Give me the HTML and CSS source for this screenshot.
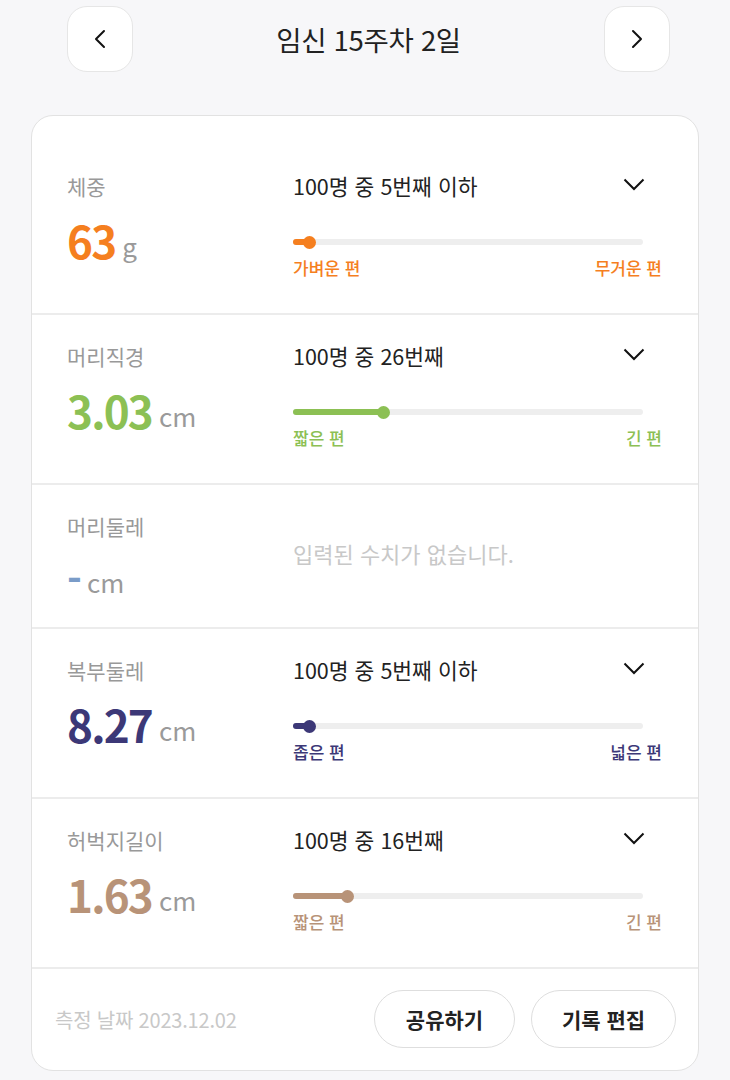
FILE: index.html
```html
<!DOCTYPE html>
<html lang="ko">
<head>
<meta charset="utf-8">
<link rel="stylesheet" href="styles.css">
</head>
<body>
<header class="topbar">
  <button class="nav-btn" aria-label="이전">
    <svg width="14" height="20" viewBox="0 0 14 20"><path d="M11 2 L3 10 L11 18" fill="none" stroke="#111" stroke-width="2" stroke-linecap="round" stroke-linejoin="round"/></svg>
  </button>
  <h1 class="title">임신 15주차 2일</h1>
  <button class="nav-btn" aria-label="다음">
    <svg width="14" height="20" viewBox="0 0 14 20"><path d="M3 2 L11 10 L3 18" fill="none" stroke="#111" stroke-width="2" stroke-linecap="round" stroke-linejoin="round"/></svg>
  </button>
</header>

<main class="card">
  <section class="row first orange">
    <div class="left">
      <div class="label">체중</div>
      <div class="value"><span class="num">63</span><span class="unit">g</span></div>
    </div>
    <div class="right">
      <div class="question"><span>100명 중 5번째 이하</span>
        <svg class="chev" width="22" height="13" viewBox="0 0 22 13"><path d="M1.5 1.5 L11 11 L20.5 1.5" fill="none" stroke="#111" stroke-width="2"/></svg>
      </div>
      <div class="track"><div class="fill" style="width:16px"></div></div>
      <div class="ends"><span>가벼운 편</span><span>무거운 편</span></div>
    </div>
  </section>

  <section class="row green">
    <div class="left">
      <div class="label">머리직경</div>
      <div class="value"><span class="num">3.03</span><span class="unit">cm</span></div>
    </div>
    <div class="right">
      <div class="question"><span>100명 중 26번째</span>
        <svg class="chev" width="22" height="13" viewBox="0 0 22 13"><path d="M1.5 1.5 L11 11 L20.5 1.5" fill="none" stroke="#111" stroke-width="2"/></svg>
      </div>
      <div class="track"><div class="fill" style="width:90px"></div></div>
      <div class="ends"><span>짧은 편</span><span>긴 편</span></div>
    </div>
  </section>

  <section class="row empty blue">
    <div class="left">
      <div class="label">머리둘레</div>
      <div class="value"><span class="num dash">-</span><span class="unit">cm</span></div>
    </div>
    <div class="right none">입력된 수치가 없습니다.</div>
  </section>

  <section class="row purple">
    <div class="left">
      <div class="label">복부둘레</div>
      <div class="value"><span class="num">8.27</span><span class="unit">cm</span></div>
    </div>
    <div class="right">
      <div class="question"><span>100명 중 5번째 이하</span>
        <svg class="chev" width="22" height="13" viewBox="0 0 22 13"><path d="M1.5 1.5 L11 11 L20.5 1.5" fill="none" stroke="#111" stroke-width="2"/></svg>
      </div>
      <div class="track"><div class="fill" style="width:16px"></div></div>
      <div class="ends"><span>좁은 편</span><span>넓은 편</span></div>
    </div>
  </section>

  <section class="row tan">
    <div class="left">
      <div class="label">허벅지길이</div>
      <div class="value"><span class="num">1.63</span><span class="unit">cm</span></div>
    </div>
    <div class="right">
      <div class="question"><span>100명 중 16번째</span>
        <svg class="chev" width="22" height="13" viewBox="0 0 22 13"><path d="M1.5 1.5 L11 11 L20.5 1.5" fill="none" stroke="#111" stroke-width="2"/></svg>
      </div>
      <div class="track"><div class="fill" style="width:54px"></div></div>
      <div class="ends"><span>짧은 편</span><span>긴 편</span></div>
    </div>
  </section>

  <footer class="foot">
    <span class="date">측정 날짜 2023.12.02</span>
    <div class="actions">
      <button class="pill share">공유하기</button>
      <button class="pill edit">기록 편집</button>
    </div>
  </footer>
</main>
</body>
</html>
```

FILE: styles.css
```css
* { box-sizing: border-box; }
html, body { margin: 0; padding: 0; }
body {
  background: #f7f7f9;
  font-family: "Noto Sans CJK KR", "Noto Sans", sans-serif;
  color: #222;
  width: 730px;
  height: 1080px;
  overflow: hidden;
}

.topbar {
  display: flex;
  align-items: center;
  justify-content: space-between;
  padding: 6px 60px 0 67px;
  height: 72px;
}
.nav-btn {
  width: 66px;
  height: 66px;
  border-radius: 20px;
  border: 1.5px solid #e6e6e6;
  background: #fff;
  display: flex;
  align-items: center;
  justify-content: center;
  padding: 0;
}
.title {
  margin: 0;
  font-size: 27.5px;
  font-weight: 400;
  color: #222;
  letter-spacing: -0.3px;
}

.card {
  margin: 43px 31px 0 31px;
  background: #fff;
  border: 1.5px solid #e2e2e2;
  border-radius: 22px;
  overflow: hidden;
}

.row {
  display: grid;
  grid-template-columns: 226px 1fr;
  padding: 26px 36px 34px 35px;
  border-bottom: 2px solid #ececec;
}
.row.first { padding-top: 55px; }
.row.empty { padding-bottom: 24px; }

.label {
  font-size: 21px;
  line-height: 30px;
  color: #999;
}
.value {
  margin-top: 14px;
  height: 50px;
  line-height: 50px;
  white-space: nowrap;
}
.row.empty .value { margin-top: 12px; }
.num {
  font-size: 44px;
  font-weight: 700;
  letter-spacing: -1.8px;
}
.unit {
  font-size: 26px;
  color: #9a9a9a;
  margin-left: 7px;
  position: relative;
  top: -2px;
}
.num.dash { font-size: 40px; }

.question {
  display: flex;
  align-items: center;
  justify-content: space-between;
  padding-right: 17px;
  font-size: 21.5px;
  line-height: 30px;
  color: #222;
}
.chev { margin-top: -4px; }

.track {
  margin-top: 38px;
  margin-right: 19px;
  height: 6px;
  border-radius: 3px;
  background: #eeeeee;
  position: relative;
}
.fill {
  height: 6px;
  border-radius: 3px;
  position: relative;
}
.fill::after {
  content: "";
  position: absolute;
  right: -6.5px;
  top: -3.5px;
  width: 13px;
  height: 13px;
  border-radius: 50%;
  background: inherit;
}

.ends {
  margin-top: 12px;
  display: flex;
  justify-content: space-between;
  font-size: 17px;
  line-height: 22px;
  font-weight: 500;
}

.right.none {
  align-self: center;
  margin-top: -8px;
  font-size: 22px;
  color: #c8c8c8;
}

.orange .num, .orange .ends { color: #f57f1f; }
.orange .fill { background: #f57f1f; }
.green .num, .green .ends { color: #8cc054; }
.green .fill { background: #8cc054; }
.blue .num { color: #7a9cc8; }
.purple .num, .purple .ends { color: #3c3877; }
.purple .fill { background: #3c3877; }
.tan .num, .tan .ends { color: #b89378; }
.tan .fill { background: #b89378; }

.foot {
  display: flex;
  align-items: center;
  justify-content: space-between;
  padding: 21px 22px 22px 23px;
}
.date {
  font-size: 20px;
  color: #c8c8c8;
  letter-spacing: -0.2px;
}
.actions {
  display: flex;
  gap: 16px;
}
.pill {
  height: 58px;
  border-radius: 29px;
  border: 1.5px solid #dedede;
  background: #fff;
  font-family: inherit;
  font-size: 21px;
  font-weight: 700;
  color: #222;
  padding: 0;
}
.pill.share { width: 141px; }
.pill.edit { width: 145px; }
```
